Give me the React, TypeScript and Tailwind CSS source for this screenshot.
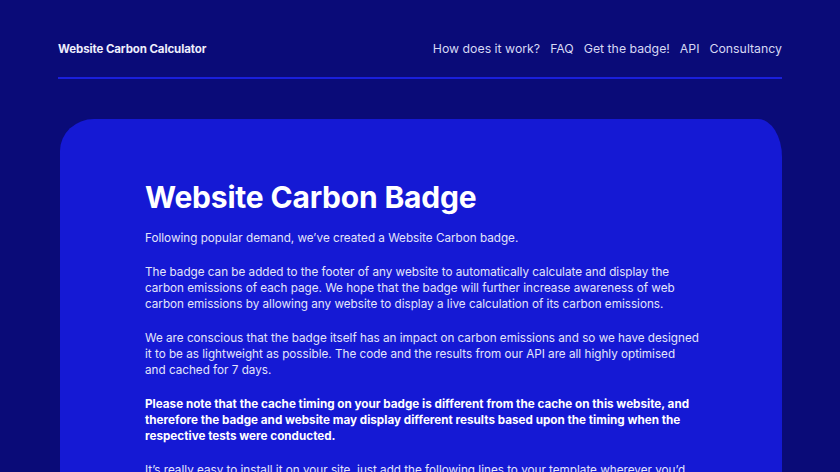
const navLinks = ['How does it work?', 'FAQ', 'Get the badge!', 'API', 'Consultancy'];

export default function App() {
  return (
    <div className="min-h-[472px] bg-[#0a0b78] font-['Inter',sans-serif] text-white overflow-hidden">
      <header className="mx-[58px] pt-[40px]">
        <div className="flex items-center justify-between pb-[19px] border-b-2 border-[#1a1fdc]">
          <a className="text-[11.5px] font-bold tracking-[-0.1px] text-[#eeeefc]">Website Carbon Calculator</a>
          <nav className="flex items-center gap-[10px] text-[12.3px] text-[#d6d8f4]">
            {navLinks.map((l) => (
              <a key={l}>{l}</a>
            ))}
          </nav>
        </div>
      </header>

      <main className="ml-[60px] mr-[58px] mt-[40px] bg-[#1519d4] rounded-tl-[34px_32px] rounded-tr-[24px_38px] pt-[59px] pb-10">
        <div className="ml-[85px] w-[580px] text-[11.7px] leading-[16px] text-[#e4e5fa]">
          <h1 className="text-[30px] leading-[38px] font-bold text-white tracking-[-0.2px] mb-[14px]">
            Website Carbon Badge
          </h1>
          <p className="mb-[18px]">Following popular demand, we’ve created a Website Carbon badge.</p>
          <p className="mb-[18px]">
            The badge can be added to the footer of any website to automatically calculate and display the
            <br />
            carbon emissions of each page. We hope that the badge will further increase awareness of web
            <br />
            carbon emissions by allowing any website to display a live calculation of its carbon emissions.
          </p>
          <p className="mb-[18px]">
            We are conscious that the badge itself has an impact on carbon emissions and so we have designed
            <br />
            it to be as lightweight as possible. The code and the results from our API are all highly optimised
            <br />
            and cached for 7 days.
          </p>
          <p className="mb-[18px] font-bold text-white">
            Please note that the cache timing on your badge is different from the cache on this website, and
            <br />
            therefore the badge and website may display different results based upon the timing when the
            <br />
            respective tests were conducted.
          </p>
          <p>
            It’s really easy to install it on your site, just add the following lines to your template wherever you’d
            <br />
            like the badge to appear.
          </p>
        </div>
      </main>
    </div>
  );
}
